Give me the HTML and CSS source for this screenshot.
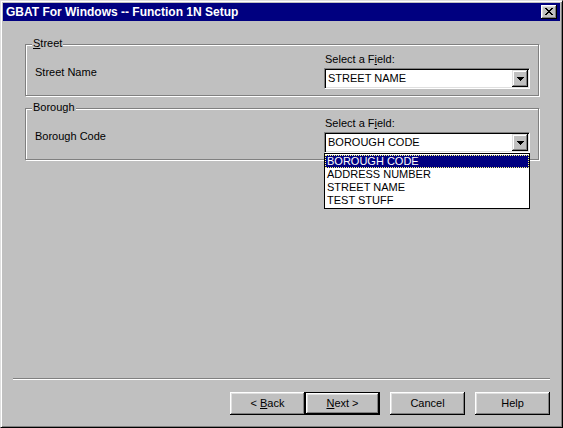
FILE: index.html
```html
<!DOCTYPE html>
<html>
<head>
<meta charset="utf-8">
<title>GBAT For Windows -- Function 1N Setup</title>
<link rel="stylesheet" href="styles.css">
</head>
<body>
<div class="window">
  <div class="titlebar">
    <span class="title">GBAT For Windows -- Function 1N Setup</span>
    <span class="close">
      <svg width="8" height="7" viewBox="0 0 8 7" shape-rendering="crispEdges">
        <rect x="0" y="0" width="2" height="1"/><rect x="6" y="0" width="2" height="1"/>
        <rect x="1" y="1" width="2" height="1"/><rect x="5" y="1" width="2" height="1"/>
        <rect x="2" y="2" width="4" height="1"/>
        <rect x="3" y="3" width="2" height="1"/>
        <rect x="2" y="4" width="4" height="1"/>
        <rect x="1" y="5" width="2" height="1"/><rect x="5" y="5" width="2" height="1"/>
        <rect x="0" y="6" width="2" height="1"/><rect x="6" y="6" width="2" height="1"/>
      </svg>
    </span>
  </div>
  <div class="body">
    <div class="group">
      <span class="group-label"><u>S</u>treet</span>
      <div class="group-row">
        <div class="field-label">Street Name</div>
        <div class="field">
          <div class="select-label">Select a F<u>i</u>eld:</div>
          <div class="combo">
            <span class="combo-value">STREET NAME</span>
            <span class="combo-btn"><svg width="7" height="4" viewBox="0 0 7 4" shape-rendering="crispEdges"><polygon points="0,0 7,0 3.5,4"/></svg></span>
          </div>
        </div>
      </div>
    </div>
    <div class="group group-second">
      <span class="group-label">Borough</span>
      <div class="group-row">
        <div class="field-label">Borough Code</div>
        <div class="field">
          <div class="select-label">Select a F<u>i</u>eld:</div>
          <div class="combo">
            <span class="combo-value">BOROUGH CODE</span>
            <span class="combo-btn"><svg width="7" height="4" viewBox="0 0 7 4" shape-rendering="crispEdges"><polygon points="0,0 7,0 3.5,4"/></svg></span>
          </div>
          <ul class="dropdown">
            <li class="item selected">BOROUGH CODE</li>
            <li class="item">ADDRESS NUMBER</li>
            <li class="item">STREET NAME</li>
            <li class="item">TEST STUFF</li>
          </ul>
        </div>
      </div>
    </div>
    <div class="spacer"></div>
    <div class="separator"></div>
    <div class="buttons">
      <button class="btn">&lt; <u>B</u>ack</button>
      <button class="btn btn-default"><u>N</u>ext &gt;</button>
      <button class="btn btn-gap">Cancel</button>
      <button class="btn btn-gap">Help</button>
    </div>
  </div>
</div>
</body>
</html>
```
FILE: styles.css
```css
html, body {
  margin: 0;
  padding: 0;
  background: #c0c0c0;
}
body {
  font-family: "Liberation Sans", Arial, sans-serif;
  font-size: 11px;
  line-height: 13px;
  color: #000;
}
.window {
  width: 563px;
  height: 428px;
  box-sizing: border-box;
  border-style: solid;
  border-width: 1px;
  border-color: #dfdfdf #000 #000 #dfdfdf;
  box-shadow: inset 1px 1px #fff, inset -1px -1px #808080;
  padding: 2px;
  display: flex;
  flex-direction: column;
  background: #c0c0c0;
}
.titlebar {
  height: 18px;
  background: #000080;
  display: flex;
  align-items: center;
  justify-content: space-between;
  padding: 0 3px 0 3px;
}
.title {
  color: #fff;
  font-weight: bold;
  font-size: 12px;
  line-height: 14px;
}
.close {
  width: 16px;
  height: 14px;
  box-sizing: border-box;
  background: #c0c0c0;
  box-shadow: inset -1px -1px #000, inset 1px 1px #fff, inset -2px -2px #808080, inset 2px 2px #dfdfdf;
  display: flex;
  align-items: center;
  justify-content: center;
  padding: 0 1px 1px 0;
}
.close svg { fill: #000; display: block; }
.body {
  flex: 1;
  display: flex;
  flex-direction: column;
  padding: 23px 10px 10px 10px;
}
.group {
  position: relative;
  margin: 0 11px 0 12px;
  border: 1px solid #808080;
  box-shadow: inset 1px 1px #fff, 1px 1px #fff;
  padding: 8px 8px 6px 9px;
}
.group-second {
  margin-top: 12px;
}
.group-label {
  position: absolute;
  top: -8px;
  left: 6px;
  padding: 0 1px;
  background: #c0c0c0;
  line-height: 13px;
}
.group-row {
  display: grid;
  grid-template-columns: 1fr 206px;
}
.field-label {
  margin-top: 13px;
  line-height: 13px;
}
.field {
  position: relative;
}
.select-label {
  padding-left: 1px;
  margin-bottom: 2px;
  line-height: 13px;
}
.combo {
  height: 21px;
  box-sizing: border-box;
  background: #fff;
  border-style: solid;
  border-width: 1px;
  border-color: #808080 #fff #fff #808080;
  box-shadow: inset 1px 1px #000, inset -1px -1px #dfdfdf;
  display: flex;
  align-items: center;
  justify-content: space-between;
  padding: 0 1px 0 3px;
}
.combo-value {
  line-height: 13px;
}
.combo-btn {
  width: 16px;
  height: 17px;
  box-sizing: border-box;
  background: #c0c0c0;
  box-shadow: inset -1px -1px #000, inset 1px 1px #dfdfdf, inset -2px -2px #808080, inset 2px 2px #fff;
  display: flex;
  align-items: center;
  justify-content: center;
}
.combo-btn svg { fill: #000; display: block; }
.dropdown {
  position: absolute;
  top: 100%;
  left: 0;
  right: 0;
  margin: 0;
  padding: 1px 0;
  list-style: none;
  background: #fff;
  border: 1px solid #000;
  z-index: 2;
}
.item {
  height: 13px;
  line-height: 13px;
  padding-left: 2px;
}
.selected {
  background: #000080;
  color: #fff;
  outline: 1px dotted #ffff80;
  outline-offset: -1px;
}
.spacer {
  flex: 1;
}
.separator {
  border-top: 1px solid #808080;
  border-bottom: 1px solid #fff;
}
.buttons {
  margin-top: 12px;
  display: flex;
  justify-content: flex-end;
}
.btn {
  width: 75px;
  height: 23px;
  box-sizing: border-box;
  margin: 0;
  padding: 0;
  border: none;
  background: #c0c0c0;
  font-family: inherit;
  font-size: 11px;
  line-height: 13px;
  color: #000;
  box-shadow: inset -1px -1px #000, inset 1px 1px #fff, inset -2px -2px #808080, inset 2px 2px #dfdfdf;
}
.btn-default {
  border: 1px solid #000;
  box-shadow: inset -1px -1px #000, inset 1px 1px #fff, inset -2px -2px #808080, inset 2px 2px #dfdfdf;
}
.btn-gap {
  margin-left: 10px;
}
```
